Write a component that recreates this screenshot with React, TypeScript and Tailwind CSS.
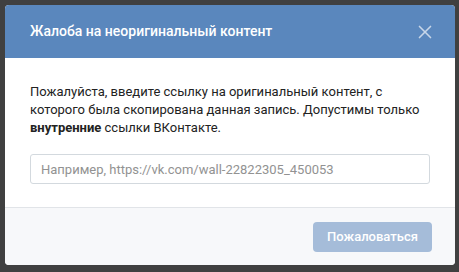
import { X } from 'lucide-react';

export default function App() {
  return (
    <div className="w-[459px] h-[272px] bg-[#404040] p-[5px] overflow-hidden font-['Roboto',sans-serif]">
      <div className="w-[450px] h-[260px] rounded-[4px] overflow-hidden bg-white flex flex-col">
        {/* Header */}
        <div className="h-[53px] bg-[#5a87bd] flex items-center justify-between pl-[25px] pr-[19px] shrink-0">
          <span className="text-white text-[14px] font-medium">
            Жалоба на неоригинальный контент
          </span>
          <X className="w-[22px] h-[22px] text-[#c7d6e8]" strokeWidth={1.8} />
        </div>

        {/* Body */}
        <div className="flex-1 px-[25px] pt-[25px]">
          <p className="text-[13px] leading-[18px] text-[#222]">
            Пожалуйста, введите ссылку на оригинальный контент, с которого была скопирована данная запись. Допустимы только{' '}
            <b className="font-bold">внутренние</b> ссылки ВКонтакте.
          </p>
          <input
            type="text"
            placeholder="Например, https://vk.com/wall-22822305_450053"
            className="mt-[17px] w-[400px] h-[30px] border border-[#d3d9de] rounded-[3px] px-[10px] text-[13px] text-[#222] placeholder:text-[#929292] outline-none"
          />
        </div>

        {/* Footer */}
        <div className="h-[58px] bg-[#f7f8fa] border-t border-[#e1e4e8] flex items-center justify-end pr-[23px] shrink-0">
          <button className="w-[119px] h-[30px] rounded-[4px] bg-[#a5bcd9] text-white text-[13px] font-medium">
            Пожаловаться
          </button>
        </div>
      </div>
    </div>
  );
}
